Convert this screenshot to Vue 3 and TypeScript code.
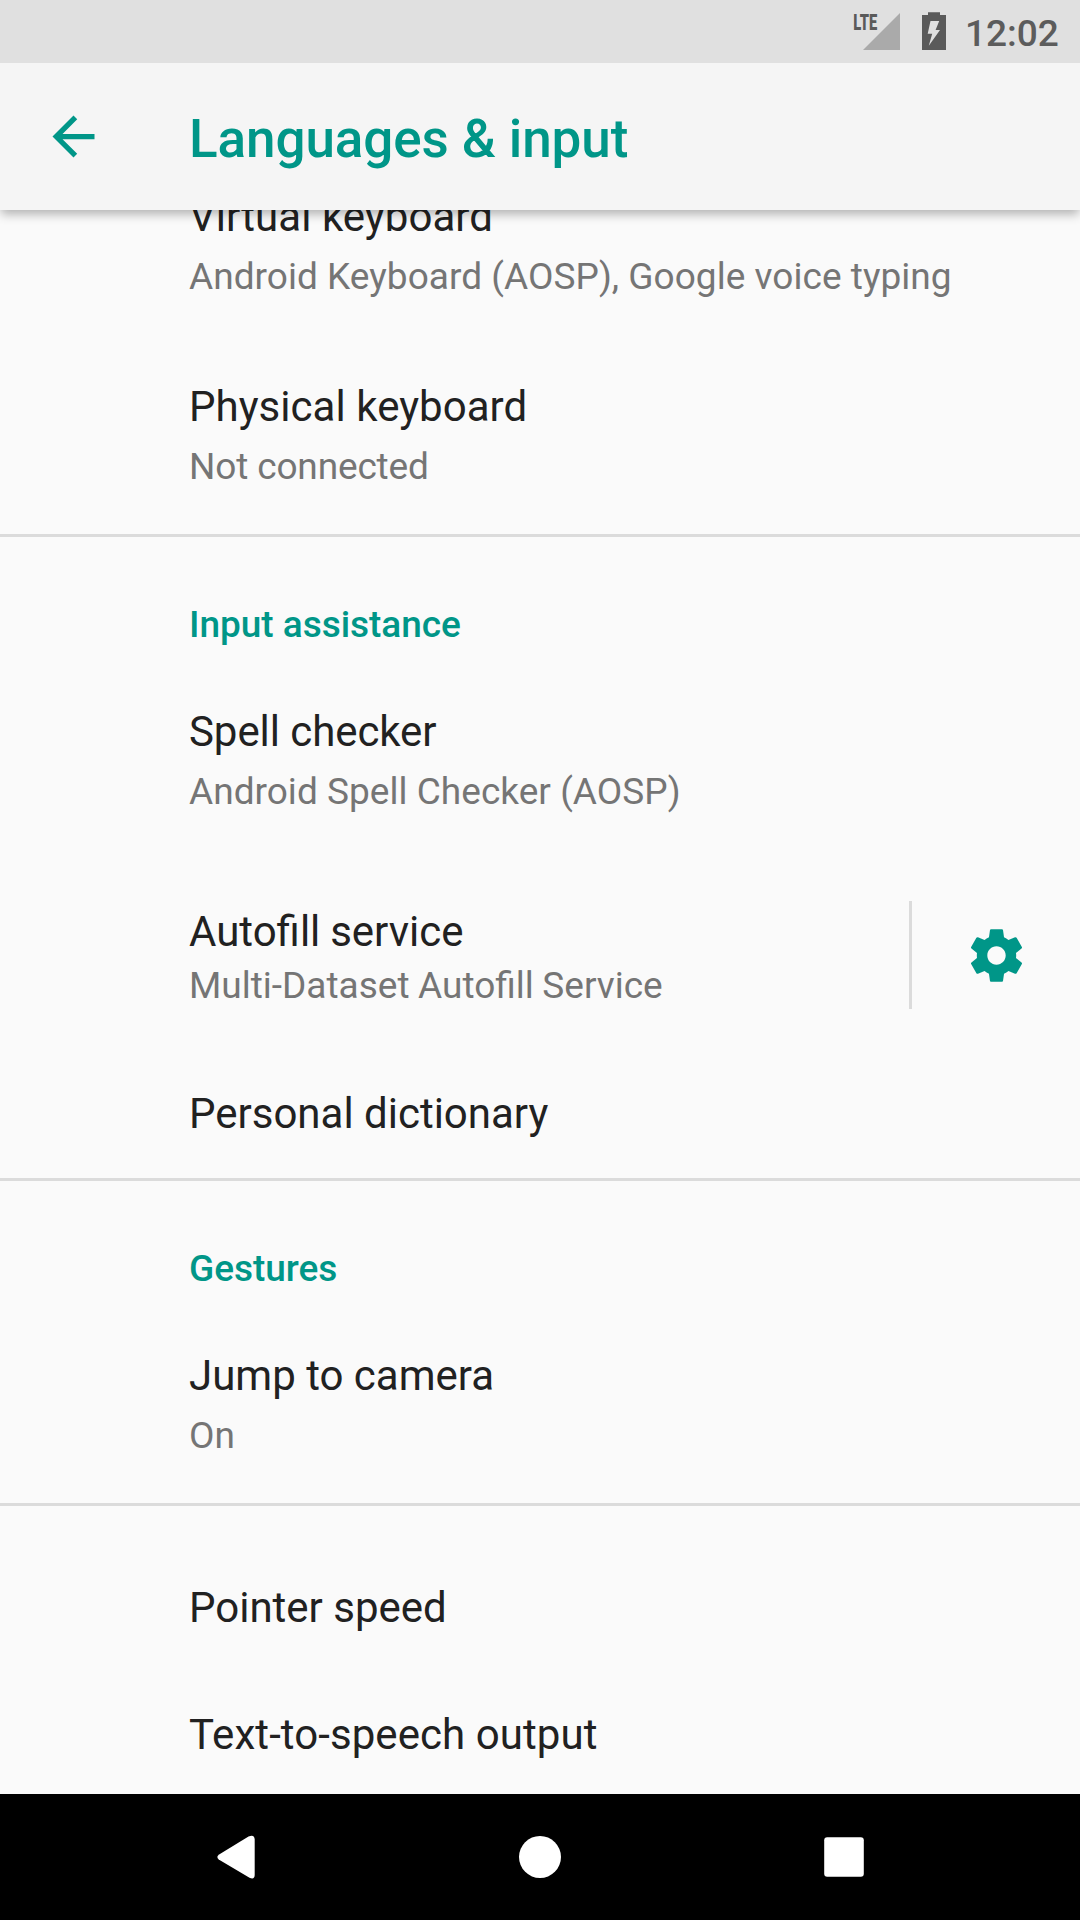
<script setup lang="ts">
interface Item {
  title: string
  summary?: string
  settings?: boolean
  titleTracking?: number
  summaryTracking?: number
}

interface Section {
  heading?: string
  items: Item[]
}

const sections: Section[] = [
  {
    items: [
      {
        title: 'Virtual keyboard',
        summary: 'Android Keyboard (AOSP), Google voice typing',
        titleTracking: 0.04,
        summaryTracking: 0.04,
      },
      {
        title: 'Physical keyboard',
        summary: 'Not connected',
        titleTracking: 0.04,
        summaryTracking: -0.15,
      },
    ],
  },
  {
    heading: 'Input assistance',
    items: [
      {
        title: 'Spell checker',
        summary: 'Android Spell Checker (AOSP)',
        titleTracking: -0.07,
        summaryTracking: 0.03,
      },
      { title: 'Autofill service', summary: 'Multi-Dataset Autofill Service', settings: true },
      { title: 'Personal dictionary' },
    ],
  },
  {
    heading: 'Gestures',
    items: [{ title: 'Jump to camera', summary: 'On' }],
  },
  {
    items: [{ title: 'Pointer speed' }, { title: 'Text-to-speech output', titleTracking: 0.07 }],
  },
]

const tracking = (px?: number) => (px ? { letterSpacing: `${px}px` } : undefined)
</script>

<template>
  <div class="screen">
    <div class="status-bar">
      <svg class="signal" width="48" height="63" viewBox="0 0 48 63">
        <path d="M47 13V50H10z" fill="#aaaaaa" />
        <text class="lte" transform="translate(0.2 30) scale(0.655 1)">LTE</text>
      </svg>
      <svg class="battery" width="24" height="63" viewBox="0 0 24 63">
        <path
          fill="#5a5a5a"
          fill-rule="evenodd"
          d="M6 12.3h12V15h6v35H0V15h6zM8.5 21L5.7 33.7H10.2L6.8 45.7L18 30H13.6L17.2 21z"
        />
      </svg>
      <span class="clock">12:02</span>
    </div>

    <header class="toolbar">
      <svg class="back" width="63" height="63" viewBox="0 0 24 24">
        <path fill="#009688" d="M20 11H7.83l5.59-5.59L12 4l-8 8 8 8 1.41-1.41L7.83 13H20z" />
      </svg>
      <h1 class="page-title">Languages &amp; input</h1>
    </header>

    <main class="list">
      <section v-for="(section, i) in sections" :key="i" class="section" :class="{ plain: !section.heading }">
        <h2 v-if="section.heading" class="heading">{{ section.heading }}</h2>
        <div
          v-for="item in section.items"
          :key="item.title"
          class="row"
          :class="{ single: !item.summary, split: item.settings }"
        >
          <div class="labels">
            <div class="title" :style="tracking(item.titleTracking)">{{ item.title }}</div>
            <div v-if="item.summary" class="summary" :style="tracking(item.summaryTracking)">
              {{ item.summary }}
            </div>
          </div>
          <div v-if="item.settings" class="action">
            <svg width="63" height="63" viewBox="0 0 24 24">
              <path
                fill="#009688"
                d="M19.43 12.98c.04-.32.07-.64.07-.98s-.03-.66-.07-.98l2.11-1.65c.19-.15.24-.42.12-.64l-2-3.46c-.12-.22-.39-.3-.61-.22l-2.49 1c-.52-.4-1.08-.73-1.69-.98l-.38-2.65C14.46 2.18 14.25 2 14 2h-4c-.25 0-.46.18-.49.42l-.38 2.65c-.61.25-1.17.59-1.69.98l-2.49-1c-.23-.09-.49 0-.61.22l-2 3.46c-.13.22-.07.49.12.64l2.11 1.65c-.04.32-.07.65-.07.98s.03.66.07.98l-2.11 1.65c-.19.15-.24.42-.12.64l2 3.46c.12.22.39.3.61.22l2.49-1c.52.4 1.08.73 1.69.98l.38 2.65c.03.24.24.42.49.42h4c.25 0 .46-.18.49-.42l.38-2.65c.61-.25 1.17-.59 1.69-.98l2.49 1c.23.09.49 0 .61-.22l2-3.46c.12-.22.07-.49-.12-.64l-2.11-1.65zM12 15.5c-1.93 0-3.5-1.57-3.5-3.5s1.57-3.5 3.5-3.5 3.5 1.57 3.5 3.5-1.57 3.5-3.5 3.5z"
              />
            </svg>
          </div>
        </div>
      </section>
    </main>

    <nav class="nav-bar">
      <svg width="64" height="64" viewBox="-0.5 -0.5 64 64">
        <path
          fill="#ffffff"
          d="M14.2 29.2L44 11Q50 8.5 50.2 14V49.5Q50 54.5 45 52.2L14.2 34Q11.5 31.5 14.2 29.2z"
        />
      </svg>
      <svg width="64" height="64" viewBox="-0.5 -0.5 64 64">
        <circle cx="31.5" cy="31.5" r="21" fill="#ffffff" />
      </svg>
      <svg width="64" height="64" viewBox="-0.5 -0.5 64 64">
        <rect x="11.7" y="11.7" width="39.6" height="39.6" rx="3" fill="#ffffff" />
      </svg>
    </nav>
  </div>
</template>

<style>
body {
  margin: 0;
}
</style>

<style scoped>
.screen {
  display: flex;
  flex-direction: column;
  width: 1080px;
  height: 1920px;
  overflow: hidden;
  background: #fafafa;
  font-family: Roboto, sans-serif;
}

svg {
  display: block;
  flex: none;
}

.status-bar {
  position: relative;
  z-index: 2;
  display: flex;
  flex: none;
  justify-content: flex-end;
  height: 63px;
  padding-right: 21px;
  background: #e0e0e0;
}

.signal {
  margin-right: 21px;
}

.lte {
  font-size: 22.5px;
  font-weight: 900;
  fill: #5a5a5a;
}

.battery {
  margin-right: 19px;
}

.clock {
  width: 94px;
  padding-top: 12px;
  font-size: 37px;
  font-weight: 500;
  line-height: 43px;
  color: #5c5c5c;
}

.toolbar {
  position: relative;
  z-index: 1;
  display: flex;
  flex: none;
  align-items: center;
  height: 147px;
  padding-left: 42px;
  background: #f5f5f5;
  box-shadow: 0 5px 10px -1px rgba(0, 0, 0, 0.3);
}

.page-title {
  margin: 5px 0 0 84px;
  font-size: 53px;
  font-weight: 500;
  line-height: 62px;
  letter-spacing: -0.09px;
  color: #009688;
}

.list {
  flex: 1;
  min-height: 0;
  overflow: hidden;
}

.section + .section {
  border-top: 3px solid #dbdbdb;
}

.section:first-child {
  margin-top: -56px;
}

.section.plain:last-child {
  padding-top: 39px;
}

.heading {
  box-sizing: border-box;
  height: 132px;
  margin: 0;
  padding: 66px 0 0 189px;
  font-size: 37px;
  font-weight: 500;
  line-height: 43px;
  letter-spacing: -0.04px;
  color: #009688;
}

.row {
  display: flex;
  box-sizing: border-box;
  height: 190px;
  padding: 38px 0 0 189px;
}

.row.single {
  height: 127px;
}

.row.split {
  align-items: center;
  justify-content: space-between;
  height: 192px;
  padding-top: 0;
}

.title {
  font-size: 42px;
  line-height: 49px;
  color: #212121;
}

.summary {
  margin-top: 14px;
  font-size: 37px;
  line-height: 43px;
  color: #757575;
}

.split .labels {
  padding-top: 4px;
  word-spacing: -0.6px;
}

.split .summary {
  margin-top: 8px;
}

.action {
  display: flex;
  align-items: center;
  box-sizing: border-box;
  width: 171px;
  height: 108px;
  padding-left: 53px;
  border-left: 3px solid #dbdbdb;
}

.nav-bar {
  display: flex;
  flex: none;
  align-items: center;
  justify-content: center;
  gap: 240px;
  height: 126px;
  background: #000000;
}
</style>
